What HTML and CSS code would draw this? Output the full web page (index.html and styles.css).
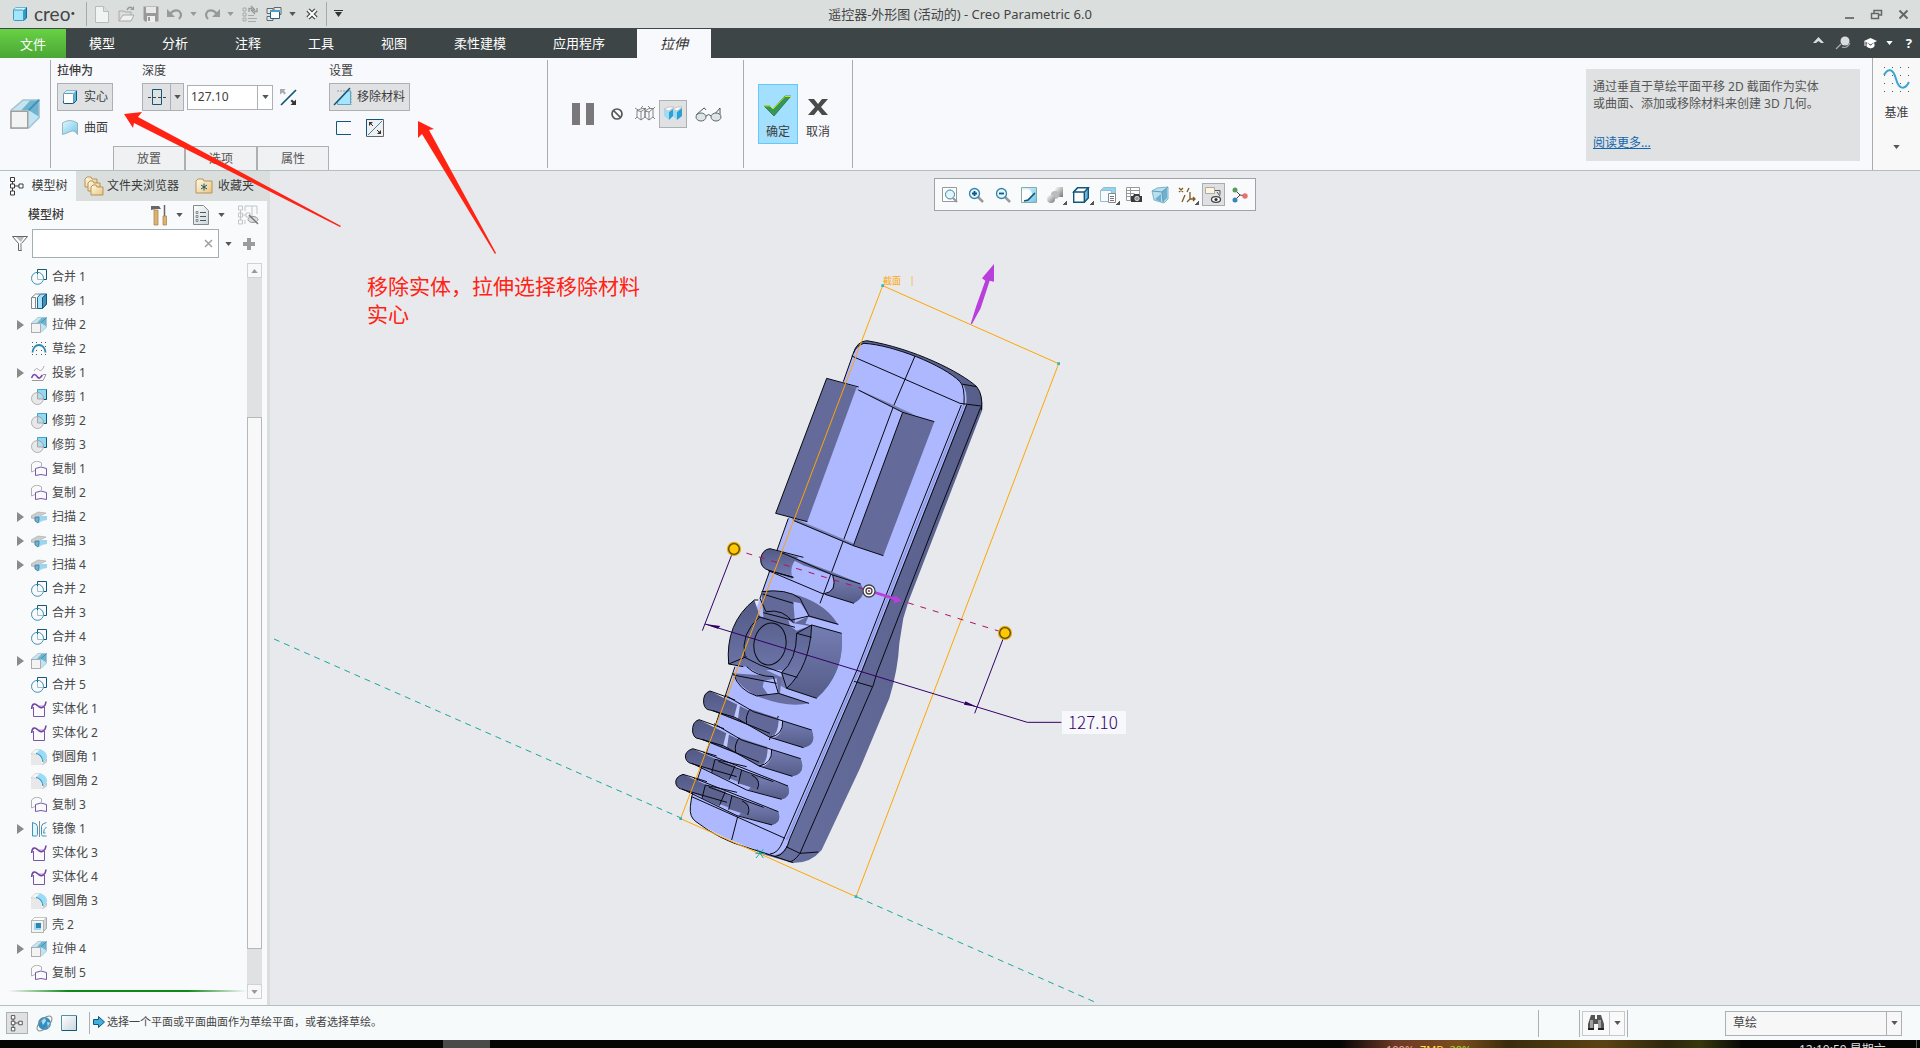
FILE: index.html
```html
<!DOCTYPE html>
<html lang="zh-CN">
<head>
<meta charset="utf-8">
<title>遥控器-外形图 (活动的) - Creo Parametric 6.0</title>
<link rel="stylesheet" href="styles.css">
</head>
<body>
<svg class="defs" aria-hidden="true">
  <defs>
    <linearGradient id="gBlue" x1="0" y1="0" x2="1" y2="1"><stop offset="0" stop-color="#e3f7fe"/><stop offset="1" stop-color="#6fc6ea"/></linearGradient>
    <linearGradient id="gDoc" x1="0" y1="0" x2="1" y2="1"><stop offset="0" stop-color="#fff"/><stop offset="1" stop-color="#c9d6de"/></linearGradient>
    <linearGradient id="gFolder" x1="0" y1="0" x2="1" y2="1"><stop offset="0" stop-color="#fffbe8"/><stop offset="1" stop-color="#ecc47c"/></linearGradient>
    <linearGradient id="gGrey" x1="0" y1="0" x2="1" y2="1"><stop offset="0" stop-color="#fff"/><stop offset="1" stop-color="#777"/></linearGradient>
    <linearGradient id="gRib" x1="0" y1="0" x2="0" y2="1"><stop offset="0" stop-color="#525985"/><stop offset="1" stop-color="#7780b6"/></linearGradient>
    <linearGradient id="gRibR" x1="0" y1="0" x2="0" y2="1"><stop offset="0" stop-color="#757eb4"/><stop offset="1" stop-color="#555c87"/></linearGradient>
    <linearGradient id="gSide" x1="0" y1="0" x2="1" y2="0"><stop offset="0" stop-color="#6a72a3"/><stop offset="1" stop-color="#575e89"/></linearGradient>
  </defs>
  <symbol id="caret" viewBox="0 0 8 5"><path d="M0 0h8L4 5z" fill="currentColor"/></symbol>
  <symbol id="expand" viewBox="0 0 7 10"><path d="M0 0l7 5-7 5z" fill="#8a8a8a"/></symbol>
  <symbol id="cubeS" viewBox="0 0 16 16"><path d="M1.500 4.500l3-3h10v10l-3 3" fill="#55b6dd" stroke="#0e5a7d"/><path d="M1.500 4.500l3-3h10l-3 3z" fill="#d3f1fc" stroke="#8db6c8"/><rect x="1.500" y="4.500" width="10" height="10" rx="1" fill="#fff" stroke="#5f9cb8"/><path d="M1.500 12v1.500q0 1 1 1h8q1 0 1-1" fill="none" stroke="#0e5a7d"/></symbol>
  <symbol id="logo" viewBox="0 0 16 16"><path d="M1.500 4l2.500-2.500h10.500v10.500l-3 2.500z" fill="#2f9bc9" stroke="#0e6f9c"/><path d="M1.500 4l2.500-2.500h10.500l-3 2.500z" fill="#d8f4fe"/><rect x="1.500" y="4" width="10" height="10.500" rx="1" fill="#a5e5fb" stroke="#3a9cc4"/></symbol>
  <symbol id="merge" viewBox="0 0 16 16"><path d="M6.500 5V.500h9v10h-3" fill="none" stroke="#12577a"/><circle cx="6.500" cy="9.300" r="6" fill="none" stroke="#3f8fb3"/><path d="M6.500 5v5.500h5" fill="none" stroke="#9cc0d0"/></symbol>
  <symbol id="offset" viewBox="0 0 16 16"><path d="M.500 4.500h4v11h-4zM.500 4.500l4-3.500h5M4.500 4.500v11M.500 15.500h8" fill="none" stroke="#888"/><path d="M6.500 4.500l3-3.500h6v10l-4 4.500h-5z" fill="#a9def4" stroke="#1a668c"/><path d="M11.500 4.500l4-3.500v10l-4 4.500z" fill="#3f93bb" stroke="#12577a"/></symbol>
  <symbol id="extrude" viewBox="0 0 16 16"><path d="M.500 6L7 .500h8.500L10 6z" fill="#c4e4f0"/><path d="M10 6l5.500-5.500v10L10 15z" fill="#bfe4f3"/><path d="M6 6l5-5.500h4.500v9L10 6z" fill="#6fb3d1"/><path d="M.500 6L7 .500h8.500v9.500L10 15.500" fill="none" stroke="#a3c3cf" stroke-width=".8"/><path d="M10 6l5.500-5.500" stroke="#3d92b8"/><rect x=".500" y="6.500" width="9" height="9" fill="#f3f3f3" stroke="#999" stroke-width=".8"/></symbol>
  <symbol id="sketch" viewBox="0 0 16 16"><path d="M1 1.500h1M5 1.500h1M10 1.500h1M14 1.500h1M1 5.500h1M14 5.500h1M5 9.500h1M10 9.500h1M1 13.500h1M5 13.500h1M10 13.500h1M14 13.500h1" stroke="#555"/><path d="M1.500 11.500c1-10 12-10 13 0" fill="none" stroke="#2b86af" stroke-width="1.800"/></symbol>
  <symbol id="project" viewBox="0 0 16 16"><path d="M3 6c2-3 3-3 5-1s4-1 5-4" fill="none" stroke="#aaa"/><path d="M1 15.500h11l3-6H12" fill="none" stroke="#999"/><path d="M.500 13c2-5 4-4 6-1s4-1 5-2" fill="none" stroke="#7e3fb0" stroke-width="1.600"/></symbol>
  <symbol id="trim" viewBox="0 0 16 16"><path d="M6.500 3.500V.500h9v10h-4z" fill="#8bdaf9" stroke="#2f8bb5" stroke-width=".8"/><path d="M15.500.500v10h-3" stroke="#12577a" fill="none"/><circle cx="6.500" cy="9.500" r="6" fill="#e8e8ea" stroke="#b0b0b0"/><path d="M6.500 10V3.500a6 6 0 0 1 6 6.500z" fill="#b8daea" stroke="#999" stroke-width=".8"/></symbol>
  <symbol id="copy" viewBox="0 0 16 16"><path d="M4 9.500L.500 11V3q5-5 10-1v3" fill="none" stroke="#b0b0b0"/><path d="M4.500 14.500v-7q5.500-3 11 0v7q-5.500-2-11 0z" fill="none" stroke="#7b55a3"/></symbol>
  <symbol id="sweep" viewBox="0 0 16 16"><path d="M0 7l7-4 8 1-8 4v3L0 9z" fill="#cdcdcd" stroke="#a5a5a5" stroke-width=".6"/><path d="M4 8l5-1h7v4l-5 1-3 2-4-2z" fill="#9fd5ec"/><path d="M4 8h4v3l-1 3-3-2z" fill="#6fb3d0" stroke="#2a7699" stroke-width=".7"/></symbol>
  <symbol id="solidify" viewBox="0 0 16 16"><path d="M6 4q4 7 8 0z" fill="#d9c9ea"/><path d="M2.500 6v9.500h11V6" fill="none" stroke="#7b55a3"/><path d="M.700 8C1 2 4 2 7 5s7 2 8-4.500" fill="none" stroke="#7342a0" stroke-width="1.600"/></symbol>
  <symbol id="round" viewBox="0 0 16 16"><path d="M0 5h4q8 1 7 11H0z" fill="#e8e8ea"/><path d="M0 5l4-4.500h6L6 5z" fill="#f5f5f5" stroke="#ccc" stroke-width=".7"/><path d="M5 4l4-3.500q7 1 7 8.500l-4 4Q12 6 5 4z" fill="#9adbf5"/><path d="M5 4.500q6 1 7 8.500" fill="none" stroke="#2b90bf" stroke-width="1.100"/><path d="M12 14l3.500-4v3L11 16" fill="#ddd" stroke="#aaa" stroke-width=".6"/></symbol>
  <symbol id="mirror" viewBox="0 0 16 16"><path d="M1.500 15V1.500q5 1 5 4v8q0 1-1 1.500z" fill="#e3f3fa" stroke="#3f93b8"/><path d="M8.500 0v16" stroke="#888"/><path d="M15.500 1.500q-5 1-5 4v8q0 1.500 1.500 1.500h3.500" fill="none" stroke="#3f93b8"/><path d="M15.500 6q-3 2-3 6h2" fill="none" stroke="#3f93b8"/></symbol>
  <symbol id="shell" viewBox="0 0 16 16"><path d="M.500 3.500l3-3h12v11l-3 3" fill="#ccd6da" stroke="#aaa"/><path d="M.500 3.500l3-3h12l-3 3z" fill="#fff" stroke="#bbb" stroke-width=".6"/><rect x=".500" y="3.500" width="12" height="12" fill="#f3f3f3" stroke="#b5b5b5"/><path d="M3 6h7v7H3z" fill="#9fd8ef"/><path d="M5 6h5v5H5z" fill="#2b87b2"/></symbol>
  <symbol id="treeIcon" viewBox="0 0 16 20"><path d="M3.500 5.500v10M3.500 10h7" fill="none" stroke="currentColor"/><path d="M1.500 1.500h4v4h-4zM1.500 8h4v4h-4zM1.500 15h4v4h-4zM10 8h4v4h-4z" fill="#fff" stroke="currentColor"/></symbol>
  <symbol id="lens" viewBox="0 0 16 16"><path d="M10 10l5 5" stroke="#9a9a9a" stroke-width="2.500"/><circle cx="6.500" cy="6.500" r="5" fill="#e5f5fb" stroke="#2f86ae" stroke-width="1.300"/></symbol>
</svg>

<header class="titlebar">
  <div class="brand"><svg class="i16"><use href="#logo"/></svg><span>creo<sup>•</sup></span></div>
  <div class="quick">
    <button aria-label="新建"><svg width="14" height="17" viewBox="0 0 14 17"><path d="M.5.5h8l5 5v11H.5z" fill="#f2f3f3" stroke="#b8bcbc"/><path d="M8.500.5v5h5" fill="#ddd" stroke="#b8bcbc"/></svg></button>
    <button aria-label="打开"><svg width="17" height="17" viewBox="0 0 17 17"><path d="M1 15V5h5l1 1h6v3" fill="#ddd" stroke="#aaa"/><path d="M1 15l4-6h11l-3 6z" fill="#f0f0f0" stroke="#aaa"/><path d="M9 4q2-4 5-2" fill="none" stroke="#999" stroke-width="1.500"/><path d="M16 0v4h-4z" fill="#999"/></svg></button>
    <button aria-label="保存"><svg width="16" height="16" viewBox="0 0 16 16"><path d="M.500.500h15v15H2l-1.500-1.500z" fill="#999"/><path d="M3 1h10v6H3z" fill="#e8e8e8"/><path d="M4 10h8v6H4z" fill="#eee"/><path d="M5 11h2v4H5z" fill="#999"/></svg></button>
    <button class="wide" aria-label="撤销"><svg width="16" height="12" viewBox="0 0 16 12"><path d="M3 6q4-5 9-3 4 4 0 8" fill="none" stroke="#999" stroke-width="2.200"/><path d="M0 1v8h8z" fill="#999"/></svg><svg class="caret dim"><use href="#caret"/></svg></button>
    <button class="wide" aria-label="重做"><svg width="16" height="12" viewBox="0 0 16 12"><path d="M13 6Q9 1 4 3q-4 4 0 8" fill="none" stroke="#999" stroke-width="2.200"/><path d="M16 1v8H8z" fill="#999"/></svg><svg class="caret dim"><use href="#caret"/></svg></button>
    <button aria-label="重新生成"><svg width="16" height="16" viewBox="0 0 16 16"><path d="M1 2h3v3H1zM1 7h3v3H1zM1 12h3v3H1zM6 9.500h6M6 12.500h9M6 15.500h8" fill="none" stroke="#aaa"/><path d="M7 6V2.500h3M9 0l2.500 2.500L9 5M15 2v3.500h-3M13 3l-2.500 2.500L13 8" fill="none" stroke="#999" stroke-width="1.300"/></svg></button>
    <button class="wide" aria-label="窗口"><svg width="16" height="15" viewBox="0 0 16 15"><path d="M1 1.500h6v5H1zM1 9.500h6v4H1zM8 .500h7v7H8z" fill="#e6e8e8" stroke="#666"/><path d="M4.500 3.500h9v8h-9z" fill="#fff" stroke="#16658b"/><path d="M4 3h10v2H4z" fill="#4ba0c7"/></svg><svg class="caret"><use href="#caret"/></svg></button>
    <button aria-label="关闭窗口"><svg width="12" height="10" viewBox="0 0 12 10"><path d="M2 1l8 8M10 1L2 9" stroke="#444" stroke-width="4.500"/><path d="M2 1l8 8M10 1L2 9" stroke="#fff" stroke-width="2"/></svg></button>
  </div>
  <button class="more" aria-label="自定义"><svg width="9" height="8" viewBox="0 0 9 8"><path d="M0 .500h9" stroke="#333"/><path d="M1 2h7L4.500 7z" fill="#333"/></svg></button>
  <h1>遥控器-外形图 (活动的) - Creo Parametric 6.0</h1>
  <div class="winbtns">
    <button aria-label="最小化"><svg width="11" height="11"><path d="M1 9h9" stroke="#777" stroke-width="2"/></svg></button>
    <button aria-label="还原"><svg width="11" height="11"><path d="M3 4V1.500h7.500V6H8M.500 4.500h7v5h-7z" fill="none" stroke="#666" stroke-width="1.500"/></svg></button>
    <button aria-label="关闭"><svg width="11" height="11"><path d="M1.500 1.500l8 8M9.500 1.500l-8 8" stroke="#666" stroke-width="2"/></svg></button>
  </div>
</header>

<nav class="menubar">
  <button class="file">文件</button>
  <button>模型</button><button>分析</button><button>注释</button><button>工具</button><button>视图</button><button>柔性建模</button><button>应用程序</button>
  <button class="current">拉伸</button>
  <div class="tools">
    <button class="fold" aria-label="折叠功能区"><svg width="11" height="7"><path d="M0 6l5.500-6L11 6H8L5.500 4 3 6z" fill="#ddd"/></svg></button>
    <button aria-label="搜索"><svg width="15" height="14"><circle cx="9" cy="5" r="4.500" fill="#d8dcdc"/><path d="M5 8l-5 5M6 11q5 2 8-4" stroke="#aaa" stroke-width="1.200" fill="none"/></svg></button>
    <button aria-label="学习"><svg width="13" height="12"><path d="M0 4l6.500-3L13 4 6.500 7.500z" fill="#fff"/><path d="M3 6.500v3q4 3 7 0v-3L6.500 9zM1 4v5" fill="#fff" stroke="#fff"/></svg><svg class="caret"><use href="#caret"/></svg></button>
    <button class="help" aria-label="帮助">?</button>
  </div>
</nav>

<section class="ribbon">
  <div class="feature"><svg width="30" height="30" viewBox="0 0 16 16"><use href="#extrude"/></svg></div>
  <div class="settings">
    <div class="groups">
      <div class="group g1">
        <h2 class="strong">拉伸为</h2>
        <button class="pressed"><svg class="i16"><use href="#cubeS"/></svg>实心</button>
        <button class="plain"><svg class="i16" viewBox="0 0 16 16"><path d="M.500 14.500V3q7-5 15 0v11.500q-3-5-7-3t-8 3z" fill="url(#gBlue)" stroke="#8aa4b0" stroke-width=".8"/></svg>曲面</button>
      </div>
      <div class="group g2">
        <h2>深度</h2>
        <div class="line">
          <button class="split" aria-label="深度类型"><span><svg width="18" height="16"><path d="M4.500.500h9v15h-9z" fill="none" stroke="#12577a"/><path d="M0 8.500h3M5 8.500h3M10 8.500h3M15 8.500h3" stroke="#444"/></svg></span><span><svg class="caret"><use href="#caret"/></svg></span></button>
          <div class="combo"><input value="127.10" aria-label="深度值"><button aria-label="深度列表"><svg class="caret"><use href="#caret"/></svg></button></div>
          <button class="bare" aria-label="反向"><svg width="17" height="17"><path d="M1 16L16 1" stroke="#12577a" stroke-width="1.700"/><path d="M0 0h5.500L4 2l2 2-1.500 1.500-2-2L0 5.500z" fill="#aaa"/><path d="M16 16h-5.500l2-2-2-2 1.500-1.500 2 2 2-2z" fill="#333"/></svg></button>
        </div>
      </div>
      <div class="group g3">
        <h2>设置</h2>
        <button class="pressed cut"><svg width="18" height="18"><path d="M3 3h14v14" fill="none" stroke="#999" stroke-dasharray="2 1"/><path d="M3.500 16.500h13V3H14L3.500 14z" fill="#a5e6fc" stroke="#5aa6c4"/><path d="M0 17L16 0" stroke="#12577a" stroke-width="1.500"/></svg>移除材料</button>
        <div class="line small">
          <button class="bare" aria-label="加厚草绘"><svg width="16" height="16"><path d="M15 1.500H.500v13H15" fill="none" stroke="#12577a"/></svg></button>
          <button class="bare" aria-label="反向材料侧"><svg width="18" height="18"><path d="M.500.500h17v17H.500z" fill="#f0f0f1" stroke="#666"/><path d="M.500 17V.500H17" fill="none" stroke="#12577a"/><path d="M2 16L16 2" stroke="#2f86ae"/><path d="M3 3h4L3 7zM15 15h-4l4-4z" fill="#333"/><path d="M4 4l3 3M14 14l-3-3" stroke="#333"/></svg></button>
        </div>
      </div>
    </div>
    <div class="subtabs"><button>放置</button><button>选项</button><button>属性</button></div>
  </div>
  <div class="preview">
    <button class="bare" aria-label="暂停"><svg width="22" height="22"><path d="M0 0h8v22H0zM14 0h8v22h-8z" fill="#7b787b"/></svg></button>
    <button class="bare" aria-label="无预览"><svg width="12" height="12"><circle cx="6" cy="6" r="5" fill="none" stroke="#555" stroke-width="1.700"/><path d="M2.500 2.500l7 7" stroke="#555" stroke-width="1.700"/></svg></button>
    <button class="bare" aria-label="分离预览"><svg width="20" height="16"><path d="M2 4.500l5-2h4l-5 3zM2 4.500V11l4 3V5.500M6 14l4-3V3M10 5l4-2.500h4L14 6zM14 6v8l4-3V3M10 5v6l4 3M0 2l3 2M8 0l-2 2M13 0l2 2M20 1l-2 2M0 13l2-2M20 13l-2-2" fill="none" stroke="#777" stroke-width=".9"/></svg></button>
    <button class="pressed sq" aria-label="连接预览"><svg width="18" height="14"><path d="M0 2l5-2h5L5 4zM9 2l5-2h4l-5 4z" fill="#fff" stroke="#aaa" stroke-width=".6"/><path d="M0 2l5 3v8L0 9zM9 2l4 3v8L9 9z" fill="#9bdcf7"/><path d="M5 5l4-3v7l-4 4zM13 5l5-4v8l-5 4z" fill="#2d9fd2"/></svg></button>
    <button class="bare" aria-label="几何预览"><svg width="27" height="16"><path d="M1 9L9 2q1 0 2 2M19 9l6-7v7" fill="none" stroke="#555"/><ellipse cx="6" cy="11" rx="5" ry="4" fill="#dce5e8" stroke="#666"/><ellipse cx="21" cy="11" rx="5" ry="4" fill="#dce5e8" stroke="#666"/><path d="M11 10q3-3 5 0" fill="none" stroke="#555"/></svg></button>
  </div>
  <div class="confirm">
    <button class="ok"><svg width="28" height="20"><path d="M0 10h6l3 3L21 0h6L10 20z" fill="#35965a" stroke="#1d5a33" stroke-width=".6"/><path d="M0 10h6l3 3L21 .500h6" fill="none" stroke="#c8e600"/></svg>确定</button>
    <button class="cancel"><svg width="20" height="16"><path d="M0 0h6l4 5 4-5h6l-7 8 7 8h-6l-4-5-4 5H0l7-8z" fill="#4a4a4a"/></svg>取消</button>
  </div>
  <aside class="tip"><p>通过垂直于草绘平面平移 2D 截面作为实体<br>或曲面、添加或移除材料来创建 3D 几何。</p><a href="#">阅读更多...</a></aside>
  <button class="datum"><svg width="27" height="27"><path d="M1 1.500h26M1 9.500h26M1 17.500h26M1 25.500h26" stroke="#555" stroke-dasharray="1 7"/><path d="M1 9c4-7 9-7 12 4s9 11 13 3" fill="none" stroke="#37a5d6" stroke-width="2"/></svg><span>基准</span><svg class="caret"><use href="#caret"/></svg></button>
</section>

<main class="work">
  <aside class="side">
    <div class="sidetabs">
      <button class="on"><svg width="16" height="20"><use href="#treeIcon"/></svg>模型树</button>
      <button class="t2"><svg width="20" height="19"><path d="M1 2l2-2h4l1 2h5v8H1z" fill="url(#gFolder)" stroke="#b5935a"/><path d="M4 6l2-2h3l1 2h6v8H4z" fill="url(#gFolder)" stroke="#b5935a"/><path d="M7 10l2-2h3l1 2h6v8H7z" fill="url(#gFolder)" stroke="#b5935a"/></svg>文件夹浏览器</button>
      <button class="t3"><svg width="18" height="16"><path d="M1 3l2-2h5l1 2h8v12H1z" fill="url(#gFolder)" stroke="#b5935a"/><path d="M9 5.500v7M6 7l6 4M12 7l-6 4" stroke="#12577a"/></svg>收藏夹</button>
    </div>
    <div class="sidebody">
      <div class="sidehead">
        <h2>模型树</h2>
        <button aria-label="设置"><svg width="17" height="20"><path d="M1 1h8l2 3H6L1 5z" fill="#666"/><path d="M4 5h4v15H4z" fill="#dcb270" stroke="#a48046" stroke-width=".7"/><path d="M14.500 0v11" stroke="#666" stroke-width="1.500"/><path d="M13 11h3.500v9H13z" fill="#dcb270" stroke="#a48046" stroke-width=".7"/></svg><svg class="caret"><use href="#caret"/></svg></button>
        <button aria-label="显示"><svg width="16" height="20"><path d="M.500.500h10l5 5v14H.500z" fill="url(#gDoc)" stroke="#888"/><path d="M7 7.500h6M7 11.500h6M7 15.500h6" stroke="#555"/><path d="M3 6.500h2v2H3zM3 10.500h2v2H3zM3 14.500h2v2H3z" fill="none" stroke="#777" stroke-width=".8"/></svg><svg class="caret"><use href="#caret"/></svg></button>
        <button aria-label="隐藏树"><svg width="21" height="20"><path d="M.500 1h4v4h-4zM.500 8h4v4h-4zM.500 15h4v4h-4zM8 8h4v4H8zM2.500 5v10M5 10h3M7 1h12v8M14 1v12M7 1v5M7 15v4" fill="none" stroke="#c2c6c6"/><ellipse cx="15" cy="14.500" rx="5" ry="3" fill="#ddd" stroke="#999"/><path d="M11 10l9 9" stroke="#777" stroke-width="1.500"/></svg></button>
      </div>
      <div class="filter">
        <svg width="16" height="15"><path d="M.500.500h15l-6 7v7h-3v-7z" fill="#fff" stroke="#666"/><path d="M8 7h2v7H8zM4 1h8L9 6z" fill="#bbb"/></svg>
        <div class="search"><input type="text" aria-label="筛选"><button aria-label="清除"><svg width="9" height="9"><path d="M1 1l7 7M8 1L1 8" stroke="#a0a0a0" stroke-width="1.500"/></svg></button></div>
        <button aria-label="筛选选项"><svg class="caret"><use href="#caret"/></svg></button>
        <button aria-label="添加"><svg width="12" height="12"><path d="M6 0v12M0 6h12" stroke="#9c9c9c" stroke-width="4"/></svg></button>
      </div>
      <div class="treewrap">
        <ul class="tree">
          <li><svg class="i16"><use href="#merge"/></svg>合并 1</li>
          <li><svg class="i16"><use href="#offset"/></svg>偏移 1</li>
          <li><button aria-label="展开"><svg><use href="#expand"/></svg></button><svg class="i16"><use href="#extrude"/></svg>拉伸 2</li>
          <li><svg class="i16"><use href="#sketch"/></svg>草绘 2</li>
          <li><button aria-label="展开"><svg><use href="#expand"/></svg></button><svg class="i16"><use href="#project"/></svg>投影 1</li>
          <li><svg class="i16"><use href="#trim"/></svg>修剪 1</li>
          <li><svg class="i16"><use href="#trim"/></svg>修剪 2</li>
          <li><svg class="i16"><use href="#trim"/></svg>修剪 3</li>
          <li><svg class="i16"><use href="#copy"/></svg>复制 1</li>
          <li><svg class="i16"><use href="#copy"/></svg>复制 2</li>
          <li><button aria-label="展开"><svg><use href="#expand"/></svg></button><svg class="i16"><use href="#sweep"/></svg>扫描 2</li>
          <li><button aria-label="展开"><svg><use href="#expand"/></svg></button><svg class="i16"><use href="#sweep"/></svg>扫描 3</li>
          <li><button aria-label="展开"><svg><use href="#expand"/></svg></button><svg class="i16"><use href="#sweep"/></svg>扫描 4</li>
          <li><svg class="i16"><use href="#merge"/></svg>合并 2</li>
          <li><svg class="i16"><use href="#merge"/></svg>合并 3</li>
          <li><svg class="i16"><use href="#merge"/></svg>合并 4</li>
          <li><button aria-label="展开"><svg><use href="#expand"/></svg></button><svg class="i16"><use href="#extrude"/></svg>拉伸 3</li>
          <li><svg class="i16"><use href="#merge"/></svg>合并 5</li>
          <li><svg class="i16"><use href="#solidify"/></svg>实体化 1</li>
          <li><svg class="i16"><use href="#solidify"/></svg>实体化 2</li>
          <li><svg class="i16"><use href="#round"/></svg>倒圆角 1</li>
          <li><svg class="i16"><use href="#round"/></svg>倒圆角 2</li>
          <li><svg class="i16"><use href="#copy"/></svg>复制 3</li>
          <li><button aria-label="展开"><svg><use href="#expand"/></svg></button><svg class="i16"><use href="#mirror"/></svg>镜像 1</li>
          <li><svg class="i16"><use href="#solidify"/></svg>实体化 3</li>
          <li><svg class="i16"><use href="#solidify"/></svg>实体化 4</li>
          <li><svg class="i16"><use href="#round"/></svg>倒圆角 3</li>
          <li><svg class="i16"><use href="#shell"/></svg>壳 2</li>
          <li><button aria-label="展开"><svg><use href="#expand"/></svg></button><svg class="i16"><use href="#extrude"/></svg>拉伸 4</li>
          <li><svg class="i16"><use href="#copy"/></svg>复制 5</li>
          <li class="insert"></li>
        </ul>
        <div class="scroll">
          <button aria-label="向上"><svg class="caret up"><use href="#caret"/></svg></button>
          <div class="track"><div class="thumb"></div></div>
          <button aria-label="向下"><svg class="caret dim"><use href="#caret"/></svg></button>
        </div>
      </div>
    </div>
  </aside>

  <section class="canvas">
    <svg class="scene" aria-label="遥控器模型">
      <g transform="translate(-270 -171)" fill="none">
        <path d="M274 639L681 818M857 897L1097 1003" stroke="#18a89a" stroke-dasharray="6 5"/>
      </g>
      <g transform="translate(390 349) scale(.33333)" fill="none" stroke-width="3" stroke-linejoin="round">
        <!-- side wall and silhouette -->
        <path d="M550-415L580-500Q590-535 620-538C760-515 900-445 950-400Q970-375 967-330L840 0 745 245 730 295 718 370Q714 450 688 535L600 745 485 990Q450 1032 395 1028L300 1000 250 960 500 300 790-460z" fill="url(#gSide)"/>
        <!-- front face -->
        <path d="M550-415L580-500Q590-525 612-530C700-525 850-465 900-415Q925-395 918-345L782 0 605 450 388 960Q370 1008 340 1005 200 965 108 905 88 892 91 860L95 830 206 505 300 235 385-5z" fill="#adb8ff"/>
        <path d="M912-345L775 0 598 450 380 960" stroke="#8f9ae0" stroke-width="6"/>
        <g class="edge">
          <path d="M550-415L580-500Q590-535 620-538C760-515 900-445 950-400Q970-375 964-330"/>
          <path d="M580-500Q590-525 612-530C700-525 850-465 900-415Q915-400 912-345M575-492L900-350 963-342M905-408L950-400"/>
          <path d="M904-345L766 0 591 450 368 965Q355 1000 330 1002M920-345L784 0 607 450 390 955Q378 1005 345 1010M962-338L828 0 650 460 640 495 420 1000Q400 1028 385 1025"/>
          <path d="M765-492L700-340 480 250M355 588L328 660M233 890L215 960M582 484L637 500M95 830L375 955M378 980L420 1000 475 996"/>
          <path d="M95 830L91 860Q88 892 108 905 180 960 260 982L400 1028M385-5L300 235M225 440L95 830"/>
        </g>
        <!-- side grips -->
        <path d="M500-425L590-398 442 5 347-20z" fill="#646b9a"/>
        <path d="M728-323L823-295 670 107 580 77z" fill="#646b9a"/>
        <path d="M545-414L700-345 765-315 728-323 595-390zM395-8L580 70v7L400 3z" fill="#7780b2"/>
        <path class="edge" d="M500-425L347-20 442 5M500-425L596-399M595-390L728-323 823-295M728-323L580 77M400 1L580 77 670 107"/>
        <!-- long slot -->
        <path d="M330 86L415 112Q385 135 398 178L330 152Q300 145 302 115 308 88 330 86z" fill="url(#gRib)"/>
        <path d="M518 165L602 192Q625 225 582 250L492 222Q530 215 518 165z" fill="url(#gRibR)"/>
        <path d="M365 98L525 160 600 190 518 166 430 136 380 110z" fill="#646b9a"/>
        <path class="edge" d="M430 112L330 86Q308 88 302 115 300 145 330 152L400 172 325 152 490 222Q535 215 518 165L602 192M365 98L518 165M495 223L582 250"/>
        <!-- dial -->
        <path d="M283 240Q195 310 206 432L260 440 375 505 470 535Q555 460 545 340L450 315 400 300 300 290z" fill="url(#gRib)"/>
        <path d="M305 215Q350 205 420 228 500 255 535 315L445 290 430 325 395 325 310 290z" fill="#636a99"/>
        <path d="M455 315L545 340Q555 460 470 535L380 505Q450 440 455 315z" fill="url(#gRibR)"/>
        <path d="M220 460L365 470 360 520 447 550Q380 565 290 528 235 500 220 460z" fill="#686fa0"/>
        <path d="M400 245L422 250 447 288 405 308zM385 300L400 310 450 318 430 325 410 332 390 318zM312 482L350 475 355 520 325 525 308 500zM318 450L365 450 365 472zM535 315L460 305 455 315 545 340z" fill="#adb8ff"/>
        <path class="edge" d="M295 240L283 240Q195 310 206 432L260 410M305 215Q380 205 420 235L447 288 535 313M308 222L400 250M310 278L395 300 447 288M300 235L318 275M455 315L545 340M455 315Q450 440 380 505L470 535M380 505L365 458M455 315L410 340Q410 420 365 458M410 340L455 352M365 458L412 472M206 432L250 440M250 410L300 435 365 458M295 290L405 322M318 275Q370 265 400 308M220 465L350 490M220 460Q235 510 290 528L355 520 447 550M260 440Q290 470 340 470L355 520M300 290Q240 340 255 410"/>
        <ellipse class="edge" cx="330" cy="372" rx="48" ry="63" transform="rotate(10 330 372)"/>
        <!-- lower ribs -->
        <g id="ribA">
          <path d="M150 513Q128 520 131 550 135 570 150 570L430 683Q472 675 455 630L280 578z" fill="url(#gRib)"/>
          <path d="M368 603L455 630Q472 675 430 683L325 650Q365 645 368 603z" fill="url(#gRibR)"/>
          <path d="M232 553L240 556 234 596 222 592zM356 600L368 603Q370 648 335 655 355 640 356 600z" fill="#c0c8ff"/>
          <path d="M270 567L355 595Q355 645 325 650L260 610z" fill="#626998"/>
          <path class="edge" d="M225 540L150 513Q128 520 131 550 135 570 150 570L225 592 330 652 430 683M195 525L280 575 455 630M270 567Q255 590 260 610M368 603Q370 645 330 652M160 572L330 640"/>
        </g>
        <use href="#ribA" x="-33" y="86"/>
        <g id="ribB">
          <path d="M98 686Q72 695 77 715 82 730 98 731L365 838Q395 830 384 798L240 750z" fill="url(#gRib)"/>
          <path d="M295 772L384 798Q395 830 365 838L265 810z" fill="url(#gRibR)"/>
          <path d="M170 718L225 738 205 780 155 758zM245 750L295 775 292 808 235 790z" fill="#5c638f"/>
          <path class="edge" d="M170 708L98 686Q72 695 77 715 82 730 98 731L260 810 365 838M130 697L384 798M165 718L260 740M165 718L155 758M225 738L207 780M245 750L235 792M275 765Q305 780 292 808M175 724L340 785M95 731L230 770"/>
        </g>
        <use href="#ribB" x="-29" y="77"/>
        <!-- section frame -->
        <path class="thin" d="M62 896L668-703 1196-469 588 1130z" stroke="#ffa500"/>
        <path d="M58 892h8v8h-8zM584 1126h8v8h-8zM664-707h8v8h-8zM1192-473h8v8h-8z" fill="#2fb5c0"/>
        <path d="M286 1000h30M292 988l18 26M310 988l-22 26" stroke="#18a89a"/>
        <path d="M932-588L948-640 976-718 966-725 1002-768V-715L989-718 962-635 936-588z" fill="#b83fdc"/>
        <!-- depth dimension -->
        <path class="thin" d="M215 105L127 332M135 312L1102 607H1204M1030 355L944 580" stroke="#330066"/>
        <path d="M135 312l46 6-8 8zM950 560l-34-16-4 10z" fill="#330066"/>
        <path class="thin" d="M222 88L627 212 1035 339" stroke="#b01060" stroke-dasharray="18 21"/>
        <path d="M627 208L704 232 706 226 726 243 702 250V240L627 216z" fill="#b83fdc"/>
        <circle cx="627" cy="213" r="18" fill="#fff" stroke="#444" stroke-width="4"/><circle cx="627" cy="213" r="9" stroke="#444" stroke-width="4"/><circle cx="627" cy="213" r="3" fill="#b01060"/>
        <circle cx="222" cy="87" r="18" fill="#ffc800" stroke="#e8b000" stroke-width="7"/><circle cx="222" cy="87" r="16" stroke="#554a20" stroke-width="4"/>
        <circle cx="1035" cy="339" r="18" fill="#ffc800" stroke="#e8b000" stroke-width="7"/><circle cx="1035" cy="339" r="16" stroke="#554a20" stroke-width="4"/>
        <path d="M1206 573h192v69h-192z" fill="#f7f8fc"/>
      </g>
      <text class="dimtext" x="798" y="558">127.10</text>
      <text class="plane" x="613" y="113">截面</text>
      <text class="plane" x="641" y="113">|</text>
    </svg>
    <div class="viewbar">
      <button aria-label="重新调整"><svg class="i16" viewBox="0 0 16 16"><path d="M.500.500h14v14H.500z" fill="#fff" stroke="#999"/><circle cx="8" cy="7.500" r="4.500" fill="#e5f5fb" stroke="#2f86ae"/><path d="M11 11l4 4" stroke="#999" stroke-width="2.200"/></svg></button>
      <button aria-label="放大"><svg class="i16" viewBox="0 0 16 16"><use href="#lens"/><path d="M6.500 4v5M4 6.500h5" stroke="#12577a" stroke-width="1.800"/></svg></button>
      <button aria-label="缩小"><svg class="i16" viewBox="0 0 16 16"><use href="#lens"/><path d="M4 6.500h5" stroke="#12577a" stroke-width="1.800"/></svg></button>
      <button aria-label="重画"><svg class="i16" viewBox="0 0 16 16"><path d="M.500.500h15v15H.500z" fill="url(#gBlue)" stroke="#8aa"/><path d="M1 3q10-3 10 5l-5 6-5 1z" fill="#fff"/><path d="M3 14l4-1 7-7" fill="none" stroke="#12577a" stroke-width="1.700"/></svg></button>
      <button class="menu" aria-label="渲染"><svg class="i16" viewBox="0 0 16 16"><path d="M8 0h8v10H8z" fill="url(#gGrey)"/><circle cx="8" cy="8" r="4" fill="#bbb"/><circle cx="4" cy="12" r="4" fill="url(#gGrey)"/></svg></button>
      <button class="menu" aria-label="显示样式"><svg class="i16" viewBox="0 0 16 16"><path d="M.700 5l4-4.300h10.600v10.300l-4 4.300" fill="#6fb6d6" stroke="#12577a" stroke-width="1.400"/><path d="M.700 5h10.600v10.300H.700zM.700 5l4-4.300h10.600L11.300 5z" fill="#fff" stroke="#12577a" stroke-width="1.400"/></svg></button>
      <button class="menu" aria-label="已保存方向"><svg class="i16" viewBox="0 0 16 16"><path d="M.500 3.500l3-3h12v12h-4" fill="#8fd5f2" stroke="#9bc"/><path d="M.500 3.500h11v11H.500z" fill="#f5fbfe" stroke="#9bc"/><path d="M8.500 6.500h7v9h-7z" fill="#fff" stroke="#888"/><path d="M10 9.500h4M10 11.500h4M10 13.500h4" stroke="#777"/></svg></button>
      <button aria-label="视图管理器"><svg class="i16" viewBox="0 0 16 16"><path d="M.500.500h13v13H.500zM.500 3.500h13M.500 6.500h8M.500 9.500h5M4.500.500v13" fill="#fff" stroke="#999"/><path d="M5 9h2l1-2h5l1 2h2v6H5z" fill="#3a3a3a"/><circle cx="11" cy="11.500" r="2.200" fill="#999" stroke="#eee" stroke-width=".8"/></svg></button>
      <button aria-label="透视图"><svg class="i16" viewBox="0 0 16 16"><path d="M0 4l5-3 11-1v12l-4 4-10-3z" fill="#b8dfee" stroke="#7fb4ca"/><path d="M10 4l5-3v10l-4 4zM3 12l6-5v8z" fill="#6fb0cc"/><path d="M0 4l10 1 1 10M10 5l6-5" stroke="#5a9dbb" fill="none"/></svg></button>
      <button class="menu" aria-label="基准显示"><svg class="i16" viewBox="0 0 16 16"><path d="M0 1l4 4M4 1L0 5M10 1L8 5M6 8l-3 7M11 5v7l-3 3M11 12h5M14 10l2 2-2 2" fill="none" stroke="#7d5a1e" stroke-width="1.300"/></svg></button>
      <button class="active" aria-label="注释显示"><svg class="i16" viewBox="0 0 16 16"><path d="M.500.500h9v6h-9z" fill="#fff4dc" stroke="#aaa"/><path d="M10 3.500h5v4M12 5l3 4" fill="none" stroke="#555"/><ellipse cx="11" cy="12.500" rx="4.500" ry="2.800" fill="#fff" stroke="#444" stroke-width="1.300"/><circle cx="11" cy="12.500" r="1.600" fill="#333"/></svg></button>
      <button aria-label="旋转中心"><svg class="i16" viewBox="0 0 16 16"><path d="M3 3l5 5 6 1M8 8l-5 5" fill="none" stroke="#444"/><circle cx="3" cy="3" r="2.500" fill="#5a9c5e"/><circle cx="13" cy="9" r="2.700" fill="#e2746e"/><circle cx="3" cy="13" r="2.500" fill="#3a86b5"/></svg></button>
    </div>
    <p class="note">移除实体，拉伸选择移除材料<br>实心</p>
  </section>
</main>

<footer class="status">
  <button class="pressed" aria-label="模型树"><svg width="14" height="18"><use href="#treeIcon"/></svg></button>
  <button aria-label="浏览器"><svg class="i17" viewBox="0 0 17 17"><circle cx="8.500" cy="8.500" r="6.500" fill="#2f8fc4"/><path d="M5 5l4-2 1 3-3 4zM11 7l4 1-3 5z" fill="#a9def4"/><ellipse cx="8.500" cy="8.500" rx="9.500" ry="4.500" transform="rotate(-45 8.500 8.500)" fill="none" stroke="#888"/></svg></button>
  <button aria-label="全屏"><svg class="i16" viewBox="0 0 16 16"><path d="M.500.500h15v15H.500z" fill="url(#gDoc)" stroke="#5590ab"/><path d="M15.500 1v14.500H1" fill="none" stroke="#12577a"/></svg></button>
  <p class="message"><svg width="12" height="12"><path d="M.500 3.500h5v-3l6 5.500-6 5.500v-3h-5z" fill="#3fb0dc" stroke="#12577a"/></svg>选择一个平面或平面曲面作为草绘平面，或者选择草绘。</p>
  <span class="bar b1"></span>
  <div class="find"><button aria-label="查找"><svg width="16" height="16"><path d="M3 0h4v4h2V0h4l3 9v6h-6V9H6v6H0V9z" fill="#555"/><path d="M2 5h3v8H2zM10 5h3v8h-3z" fill="#a0a0a0"/><path d="M0 13h6v2H0zM10 13h6v2h-6z" fill="#222"/></svg></button><button aria-label="查找选项"><svg class="caret"><use href="#caret"/></svg></button></div>
  <div class="picker"><select aria-label="选择过滤器"><option>草绘</option></select><span><svg class="caret"><use href="#caret"/></svg></span></div>
</footer>

<div class="taskbar">
  <span class="task"></span>
  <div class="tray"><span class="s1">100%</span><span class="s2">ZMB</span><span class="s3">20%</span></div>
  <time>12:10:59 星期六</time>
</div>

<svg class="arrows" width="520" height="270" aria-hidden="true">
  <path d="M124 114L142 112 138 117 341 226 340 227 134 123 133 128zM418 121L434 129 429 130 496 253 495 254 422 134 418 138z" fill="#ff2314"/>
</svg>
</body>
</html>
```
FILE: styles.css
```css
* { box-sizing: border-box; }
html, body { height: 100%; }
body {
  margin: 0;
  display: flex;
  flex-direction: column;
  position: relative;
  overflow: hidden;
  background: #f8f9fc;
  color: #444;
  font: 12px/18px "Noto Sans", "Noto Sans CJK SC", sans-serif;
}
button, input, select { font: inherit; color: inherit; }
button {
  display: flex;
  align-items: center;
  justify-content: center;
  padding: 0;
  border: 0;
  background: none;
  white-space: nowrap;
}
h1, h2, p, ul { margin: 0; padding: 0; font-weight: 400; }
svg { flex: none; display: block; overflow: visible; }
.defs { position: absolute; width: 0; height: 0; }
.i16 { width: 16px; height: 16px; }
.i17 { width: 17px; height: 17px; }
.caret { width: 7px; height: 4px; color: #555; }
.caret.dim { color: #999; }
.caret.up { transform: rotate(180deg); color: #999; }

/* Title bar */
.titlebar {
  height: 28px;
  flex: none;
  display: flex;
  align-items: center;
  position: relative;
  background: #dadfde;
}
.brand {
  display: flex;
  align-items: center;
  gap: 6px;
  width: 87px;
  height: 24px;
  padding-left: 12px;
  border-right: 1px solid #a5aaaa;
  font: 19px/20px "Lato", sans-serif;
}
.brand sup { font-size: 8px; line-height: 8px; vertical-align: 5px; }
.quick { display: flex; align-items: center; gap: 8px; padding: 0 6px 0 7px; }
.quick button { min-width: 16px; height: 20px; }
.quick .wide { gap: 7px; }
.quick .wide + .wide { margin-left: -1px; }
.more { height: 24px; padding-left: 7px; border-left: 1px solid #a5aaaa; }
.titlebar h1 {
  position: absolute;
  left: 0;
  right: 0;
  text-align: center;
  font-size: 13px;
  pointer-events: none;
}
.winbtns { margin-left: auto; display: flex; gap: 16px; padding-right: 11px; }

/* Menu bar */
.menubar {
  height: 30px;
  flex: none;
  display: flex;
  gap: 1px;
  background: #3d4546;
  color: #fff;
  font-size: 13px;
}
.menubar > button { padding: 0 23px; }
.menubar > .file {
  width: 66px;
  margin: 1px -1px 0 0;
  padding: 0;
  background: linear-gradient(#68d244, #4aa636);
}
.menubar > .current {
  margin: 1px 0 0 8px;
  background: #f8f9fc;
  color: #333;
  font-size: 14px;
  font-style: italic;
}
.tools { margin-left: auto; display: flex; align-items: center; gap: 13px; padding-right: 8px; }
.tools button { gap: 9px; }
.tools .fold { margin: -6px -1px 0 0; }
.tools .caret { color: #fff; }
.tools .help { font-size: 13px; font-weight: 700; }

/* Ribbon */
.ribbon {
  height: 113px;
  flex: none;
  display: flex;
  border-bottom: 1px solid #b3bfc0;
  color: #3c3c3c;
}
.ribbon > div { position: relative; }
.ribbon > div::after {
  content: "";
  position: absolute;
  right: 0;
  top: 2px;
  bottom: 2px;
  width: 1px;
  background: #a8acac;
}
.feature { width: 51px; padding: 41px 0 0 10px; }
.settings { width: 497px; display: flex; flex-direction: column; justify-content: space-between; }
.groups { display: flex; padding-left: 6px; }
.group { display: flex; flex-direction: column; align-items: flex-start; padding-top: 3px; }
.g1 { width: 85px; }
.g2 { width: 187px; }
.group h2 { height: 22px; line-height: 20px; font-size: 12px; }
.group h2.strong { font-weight: 500; }
.line { display: flex; align-items: center; gap: 3px; }
.pressed { height: 28px; gap: 6px; padding: 0 4px; border: 1px solid #acb0b2; background: #e0e1e3; }
.group .plain { height: 28px; margin-top: 3px; padding: 0 5px; gap: 6px; }
.split { height: 28px; border: 1px solid #acb0b2; background: #e0e1e3; }
.split span { display: flex; align-items: center; justify-content: center; height: 26px; width: 27px; }
.split span + span { width: 13px; border-left: 1px solid #acb0b2; }
.combo { display: flex; width: 86px; height: 25px; border: 1px solid #acb0b2; background: #fff; }
.combo input { flex: 1; min-width: 0; padding: 0 3px; border: 0; background: none; font-size: 12px; outline: 0; }
.combo button { width: 15px; border-left: 1px solid #acb0b2; }
.combo + .bare { margin-left: 4px; }
.cut { gap: 5px; }
.small { gap: 14px; padding: 8px 0 0 7px; }
.subtabs { display: flex; height: 0; flex: 1; align-items: flex-end; padding-left: 62px; color: #555; }
.subtabs button { width: 72px; height: 24px; border: 1px solid #acb0b2; border-bottom: 0; background: #f0f1f3; }
.preview { width: 196px; display: flex; align-items: center; padding: 0 0 0 24px; gap: 8px; }
.preview .bare:first-child { margin-right: 9px; }
.preview .bare:nth-child(2) { margin-right: 4px; }
.preview .sq { width: 28px; margin-left: -4px; padding: 0; }
.confirm { width: 109px; display: flex; align-items: center; padding-left: 14px; }
.confirm button { flex-direction: column; justify-content: flex-end; width: 40px; height: 60px; padding-bottom: 3px; gap: 7px; }
.confirm .ok { border: 1px solid #66c8f5; background: #a3e0ff; padding-bottom: 2px; }
.confirm .cancel { gap: 8px; }
.tip { width: 274px; height: 92px; margin: 11px 12px 0 auto; padding: 9px 7px; background: #dfe1e2; color: #555; line-height: 17px; }
.tip a { display: inline-block; margin-top: 22px; color: #0f66ae; }
.datum { width: 48px; flex-direction: column; justify-content: flex-start; padding-top: 8px; border-left: 1px solid #a8acac; background: #f8f8f9; }
.datum span { margin: 11px 0 23px; }

/* Work area */
.work { flex: 1; min-height: 0; display: flex; }
.side { width: 270px; flex: none; display: flex; flex-direction: column; background: #dadfde; color: #3a3a3a; }
.sidetabs { height: 30px; flex: none; display: flex; }
.sidetabs button { gap: 3px; padding: 0 8px; }
.sidetabs .on { width: 76px; padding: 0 8px 0 9px; gap: 6px; background: #f7fafc; }
.sidetabs .t3 { padding-left: 8px; gap: 5px; }
.sidebody { flex: 1; min-height: 0; margin-right: 3px; display: flex; flex-direction: column; background: #f8fafc; }
.sidehead { height: 28px; flex: none; display: flex; align-items: center; padding: 0 8px 0 28px; }
.sidehead h2 { flex: 1; font-size: 12px; font-weight: 500; }
.sidehead button { gap: 9px; margin-left: 10px; }
.sidehead button:last-child { margin-left: 13px; }
.filter { height: 29px; flex: none; display: flex; align-items: center; padding-left: 12px; }
.search { display: flex; width: 187px; height: 29px; margin: 0 6px 0 4px; padding-right: 5px; border: 1px solid #a3b0b1; background: #fff; }
.search input { flex: 1; min-width: 0; border: 0; outline: 0; background: none; }
.filter > button + button { margin-left: 11px; }
.treewrap { flex: 1; min-height: 0; display: flex; padding: 5px 5px 6px 8px; }
.tree { flex: 1; overflow: hidden; list-style: none; color: #484848; padding-top: 2px; }
.tree li { display: flex; align-items: center; height: 24px; padding-left: 23px; gap: 5px; }
.tree li button { width: 7px; height: 10px; margin: 0 2px 0 -14px; }
.tree li button svg { width: 7px; height: 10px; }
.tree li.insert { height: 2px; margin-top: 5px; padding: 0; background: linear-gradient(90deg, transparent, #0d8a17 25%, #0d8a17 75%, transparent); }
.scroll { width: 15px; display: flex; flex-direction: column; background: #dfe1e3; }
.scroll button { height: 15px; flex: none; border: 1px solid #cfd3d5; background: #f8f8f8; }
.track { flex: 1; display: flex; flex-direction: column; padding: 139px 0 35px; }
.thumb { flex: 1; border: 1px solid #b4b8ba; background: #f8f8f9; }

.canvas { flex: 1; min-width: 0; position: relative; overflow: hidden; background: #e8e9ed; }
.scene { width: 100%; height: 100%; }
.scene .edge { fill: none; stroke: #080810; stroke-width: 3px; shape-rendering: crispEdges; }
.scene .thin { shape-rendering: crispEdges; }
.scene .dimtext { fill: #330066; font: 300 17px "Noto Sans CJK SC", sans-serif; }
.scene .plane { fill: #ffa500; font: 9px "Noto Sans CJK SC", sans-serif; }
.viewbar {
  position: absolute;
  top: 7px;
  left: 50%;
  display: flex;
  width: 322px;
  height: 33px;
  margin-left: -161px;
  padding: 0 2px;
  align-items: center;
  border: 1px solid #a0a2a5;
  background: #f9fafc;
}
.viewbar button { flex: 1; height: 23px; position: relative; }
.viewbar .menu::after {
  content: "";
  position: absolute;
  right: 1px;
  bottom: 1px;
  width: 4px;
  height: 4px;
  background: linear-gradient(135deg, transparent 50%, #555 50%);
}
.viewbar .active { flex: none; width: 23px; margin: 0 2px; border: 1px solid #aaadaf; background: #dfe0e2; }
.note { position: absolute; left: 97px; top: 100px; color: #ff2314; font: 21px/28px "Noto Sans CJK SC", sans-serif; }

/* Status bar */
.status {
  height: 35px;
  flex: none;
  display: flex;
  align-items: center;
  padding: 0 18px 0 6px;
  gap: 8px;
  border-top: 1px solid #b3bfc0;
  background: #f7fafb;
}
.status .pressed { width: 22px; height: 22px; padding: 0; }
.message {
  flex: 1;
  display: flex;
  align-items: center;
  gap: 2px;
  height: 22px;
  margin-left: 4px;
  padding: 0 0 2px 3px;
  border-left: 1px solid #acb0b2;
  font-size: 11px;
  line-height: 16px;
}
.bar { width: 1px; height: 27px; margin-right: 32px; background: #acb0b2; }
.find { display: flex; height: 27px; margin-right: 89px; padding: 1px 2px; border: solid #acb0b2; border-width: 0 1px; }
.find button { width: 28px; border: 1px solid #c5c9cb; background: #f9f9f9; }
.find button + button { width: 15px; border-left: 0; }
.picker { display: flex; width: 177px; height: 25px; border: 1px solid #acb0b2; background: #f7f7f7; }
.picker select { flex: 1; padding: 0 7px; border: 0; appearance: none; background: none; }
.picker span { display: flex; align-items: center; justify-content: center; width: 15px; border-left: 1px solid #acb0b2; }

/* Desktop task bar, mostly below the screen edge */
.taskbar {
  height: 8px;
  flex: none;
  display: flex;
  overflow: hidden;
  padding: 0 3px 0 443px;
  background: #050505;
  color: #ddd;
}
.task { width: 47px; background: #4a4a4a; }
.tray {
  display: flex;
  gap: 6px;
  width: 400px;
  margin-left: auto;
  padding: 4px 0 0 46px;
  background: linear-gradient(90deg, #050505, #6e3a28 14%, #7a4d1c 30%, #3a2c0c 42%, #5b4314 66%, #2c260c 82%, #36380c 90%, #0a0a08);
  font-size: 11px;
  line-height: 12px;
}
.s1 { color: #f0b090; }
.s2 { color: #ffe040; }
.s3 { color: #90e020; }
.taskbar time { width: 177px; padding: 2px 0 0 59px; border-right: 1px solid #555; font-size: 12px; line-height: 16px; white-space: nowrap; }

/* Callout arrows over the window */
.arrows { position: absolute; left: 0; top: 0; pointer-events: none; }
```
